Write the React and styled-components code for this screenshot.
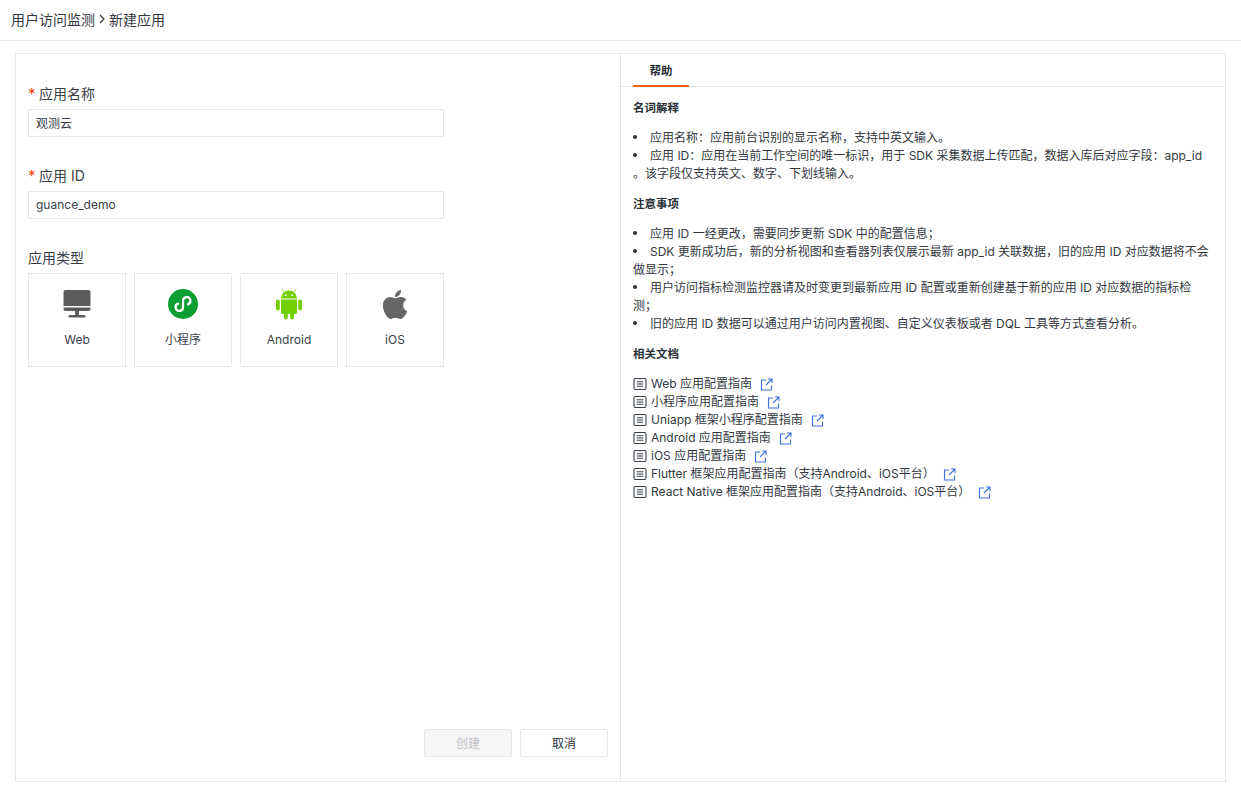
import React from "react";
import styled, { createGlobalStyle } from "styled-components";
import { FaApple } from "react-icons/fa";

const Global = createGlobalStyle`
  html, body { margin: 0; padding: 0; background: #fff; }
  body { font-family: Inter, "Noto Sans CJK SC", "Liberation Sans", sans-serif; color: #2a3038; }
  * { box-sizing: border-box; }
`;

const Page = styled.div`
  width: 1241px;
  height: 789px;
  display: flex;
  flex-direction: column;
  overflow: hidden;
`;
const Header = styled.header`
  height: 41px;
  flex: none;
  padding: 0 11px 3px;
  display: flex;
  align-items: center;
  font-size: 14px;
  color: #33383f;
  border-bottom: 1px solid #e4e6ea;
`;
const Chevron = styled.svg`
  width: 6px;
  height: 10px;
  margin: 1px 4px 0;
`;
const Panel = styled.main`
  margin: 12px 15px 7px;
  flex: 1;
  min-height: 0;
  display: flex;
  border: 1px solid #e4e6ea;
`;
const FormSide = styled.section`
  width: 605px;
  flex: none;
  border-right: 1px solid #e4e6ea;
  padding: 28px 12px 24px;
  display: flex;
  flex-direction: column;
`;
const Field = styled.div`
  margin-bottom: ${(p) => p.$gap}px;
`;
const Label = styled.div`
  height: 27px;
  line-height: 23px;
  display: flex;
  align-items: flex-start;
  font-size: 14px;
  color: #3a4048;
`;
const Star = styled.span`
  color: #f4400e;
  margin-right: 4px;
  font-size: 15px;
  width: 7px;
`;
const Input = styled.input`
  display: block;
  width: 416px;
  height: 28px;
  padding: 0 7px 2px;
  border: 1px solid #e4e6ea;
  border-radius: 2px;
  font: inherit;
  font-size: 12px;
  color: #3a4048;
  outline: none;
`;
const Tiles = styled.div`
  display: flex;
  gap: 8px;
`;
const Tile = styled.div`
  width: 98px;
  height: 94px;
  border: 1px solid #e4e6ea;
  display: flex;
  flex-direction: column;
  align-items: center;
  padding-top: 14px;
`;
const TileIcon = styled.div`
  width: 32px;
  height: 32px;
  display: flex;
  align-items: center;
  justify-content: center;
  color: ${(p) => p.$color || "#5c5c5c"};
`;
const TileName = styled.div`
  margin-top: 11px;
  font-size: 12px;
  line-height: 18px;
  color: #3a4048;
`;
const Actions = styled.div`
  margin-top: auto;
  display: flex;
  justify-content: flex-end;
  gap: 8px;
`;
const Button = styled.button`
  width: 88px;
  height: 28px;
  padding: 0 0 2px;
  border: 1px solid #e4e6ea;
  border-radius: 2px;
  font: inherit;
  font-size: 12px;
  background: ${(p) => (p.disabled ? "#f5f5f6" : "#fff")};
  color: ${(p) => (p.disabled ? "#bfc2c6" : "#2a3038")};
`;
const HelpSide = styled.section`
  flex: 1;
  min-width: 0;
  display: flex;
  flex-direction: column;
`;
const TabBar = styled.div`
  height: 33px;
  flex: none;
  padding: 0 12px;
  display: flex;
  border-bottom: 1px solid #e4e6ea;
`;
const Tab = styled.div`
  width: 56px;
  height: 33px;
  border-bottom: 2px solid #f4601c;
  display: flex;
  align-items: center;
  justify-content: center;
  font-size: 11.5px;
  font-weight: 700;
  color: #2a3038;
`;
const Help = styled.div`
  padding: 12px 12px 0;
  font-size: 12px;
  line-height: 18px;
  color: #33383f;
`;
const Title = styled.h4`
  margin: 0 0 12px;
  font-size: 11.5px;
  line-height: 18px;
  font-weight: 700;
  color: #2a3038;
`;
const Bullets = styled.ul`
  margin: 0 0 12px;
  padding: 0;
  list-style: none;
`;
const Bullet = styled.li`
  &::before {
    content: "";
    display: inline-block;
    width: 4px;
    height: 4px;
    border-radius: 50%;
    background: #2a3038;
    margin-right: 13px;
    vertical-align: 3px;
  }
`;
const Docs = styled.div`
  display: flex;
  flex-direction: column;
`;
const Doc = styled.div`
  display: flex;
  align-items: center;
  height: 18px;
  white-space: nowrap;
`;
const DocIcon = styled.svg`
  width: 14px;
  height: 14px;
  margin-right: 4px;
  flex: none;
`;
const LinkIcon = styled.svg`
  width: 13px;
  height: 13px;
  margin-left: 8px;
  flex: none;
`;

const Monitor = () => (
  <svg width="30" height="30" viewBox="0 0 30 30">
    <path d="M3.500 1h23a2 2 0 0 1 2 2v14h-27V3a2 2 0 0 1 2-2z" fill="#5c5c5c" />
    <path d="M1.500 18.500h27V20a2 2 0 0 1-2 2h-23a2 2 0 0 1-2-2z" fill="#5c5c5c" />
    <path d="M13 22h4v4h-4z" fill="#5c5c5c" />
    <rect x="6.500" y="26" width="17" height="2.600" rx="1.300" fill="#5c5c5c" />
  </svg>
);
const MiniProgram = () => (
  <svg width="30" height="30" viewBox="0 0 30 30">
    <circle cx="15" cy="15" r="15" fill="#0b9e32" />
    <path
      d="M15 12v6.200a3.700 3.700 0 1 1-4.900-3.500M15 18v-6.200a3.700 3.700 0 1 1 4.900 3.500"
      fill="none"
      stroke="#fff"
      strokeWidth="2.300"
      strokeLinecap="round"
    />
  </svg>
);
const AndroidRobot = () => (
  <svg width="28" height="32" viewBox="0 0 28 32" fill="#73d000">
    <path d="M6 10.500a8 8 0 0 1 16 0z" />
    <path d="M8.500 3.800 7 1.300M19.500 3.800 21 1.300" stroke="#73d000" strokeWidth=".8" />
    <circle cx="10.700" cy="7.200" r=".9" fill="#fff" />
    <circle cx="17.300" cy="7.200" r=".9" fill="#fff" />
    <path d="M6 11.500h16v13a1.500 1.500 0 0 1-1.500 1.500h-13A1.500 1.500 0 0 1 6 24.500z" />
    <rect x="1" y="11.500" width="3.800" height="11" rx="1.900" />
    <rect x="23.200" y="11.500" width="3.800" height="11" rx="1.900" />
    <rect x="9" y="24" width="3.800" height="7.500" rx="1.900" />
    <rect x="15.200" y="24" width="3.800" height="7.500" rx="1.900" />
  </svg>
);
const DocGlyph = () => (
  <DocIcon viewBox="0 0 14 14" fill="none">
    <rect x="1" y="1.500" width="12" height="11" rx="1.500" stroke="#3a4048" strokeWidth="1.100" />
    <path d="M3.800 4.800h6.400M3.800 7h6.400M3.800 9.200h6.400" stroke="#3a4048" strokeWidth="1.100" />
  </DocIcon>
);
const ExternalGlyph = () => (
  <LinkIcon viewBox="0 0 13 13" fill="none" stroke="#3b6fe0" strokeWidth="1.100">
    <path d="M6 2H1.500v10h10V7.500" />
    <path d="M8 1h4v4M12 1 6 7" />
  </LinkIcon>
);

const docs = [
  "Web 应用配置指南",
  "小程序应用配置指南",
  "Uniapp 框架小程序配置指南",
  "Android 应用配置指南",
  "iOS 应用配置指南",
  "Flutter 框架应用配置指南（支持Android、iOS平台）",
  "React Native 框架应用配置指南（支持Android、iOS平台）",
];
const types = [
  { name: "Web", icon: <Monitor /> },
  { name: "小程序", icon: <MiniProgram /> },
  { name: "Android", icon: <AndroidRobot /> },
  { name: "iOS", color: "#666", icon: <FaApple size={33} /> },
];

export default function App() {
  return (
    <Page>
      <Global />
      <Header>
        用户访问监测
        <Chevron viewBox="0 0 6 10" fill="none" stroke="#33383f" strokeWidth="1.200">
          <path d="M1 1l4 4-4 4" />
        </Chevron>
        新建应用
      </Header>
      <Panel>
        <FormSide>
          <Field $gap={27}>
            <Label><Star>*</Star>应用名称</Label>
            <Input readOnly value="观测云" />
          </Field>
          <Field $gap={27}>
            <Label><Star>*</Star>应用 ID</Label>
            <Input readOnly value="guance_demo" />
          </Field>
          <Field $gap={0}>
            <Label>应用类型</Label>
            <Tiles>
              {types.map((t) => (
                <Tile key={t.name}>
                  <TileIcon $color={t.color}>{t.icon}</TileIcon>
                  <TileName>{t.name}</TileName>
                </Tile>
              ))}
            </Tiles>
          </Field>
          <Actions>
            <Button disabled>创建</Button>
            <Button>取消</Button>
          </Actions>
        </FormSide>
        <HelpSide>
          <TabBar><Tab>帮助</Tab></TabBar>
          <Help>
            <Title>名词解释</Title>
            <Bullets>
              <Bullet>应用名称：应用前台识别的显示名称，支持中英文输入。</Bullet>
              <Bullet>应用 ID：应用在当前工作空间的唯一标识，用于 SDK 采集数据上传匹配，数据入库后对应字段：app_id 。该字段仅支持英文、数字、下划线输入。</Bullet>
            </Bullets>
            <Title>注意事项</Title>
            <Bullets>
              <Bullet>应用 ID 一经更改，需要同步更新 SDK 中的配置信息；</Bullet>
              <Bullet>SDK 更新成功后，新的分析视图和查看器列表仅展示最新 app_id 关联数据，旧的应用 ID 对应数据将不会做显示；</Bullet>
              <Bullet>用户访问指标检测监控器请及时变更到最新应用 ID 配置或重新创建基于新的应用 ID 对应数据的指标检测；</Bullet>
              <Bullet>旧的应用 ID 数据可以通过用户访问内置视图、自定义仪表板或者 DQL 工具等方式查看分析。</Bullet>
            </Bullets>
            <Title>相关文档</Title>
            <Docs>
              {docs.map((text) => (
                <Doc key={text}>
                  <DocGlyph />
                  {text}
                  <ExternalGlyph />
                </Doc>
              ))}
            </Docs>
          </Help>
        </HelpSide>
      </Panel>
    </Page>
  );
}
